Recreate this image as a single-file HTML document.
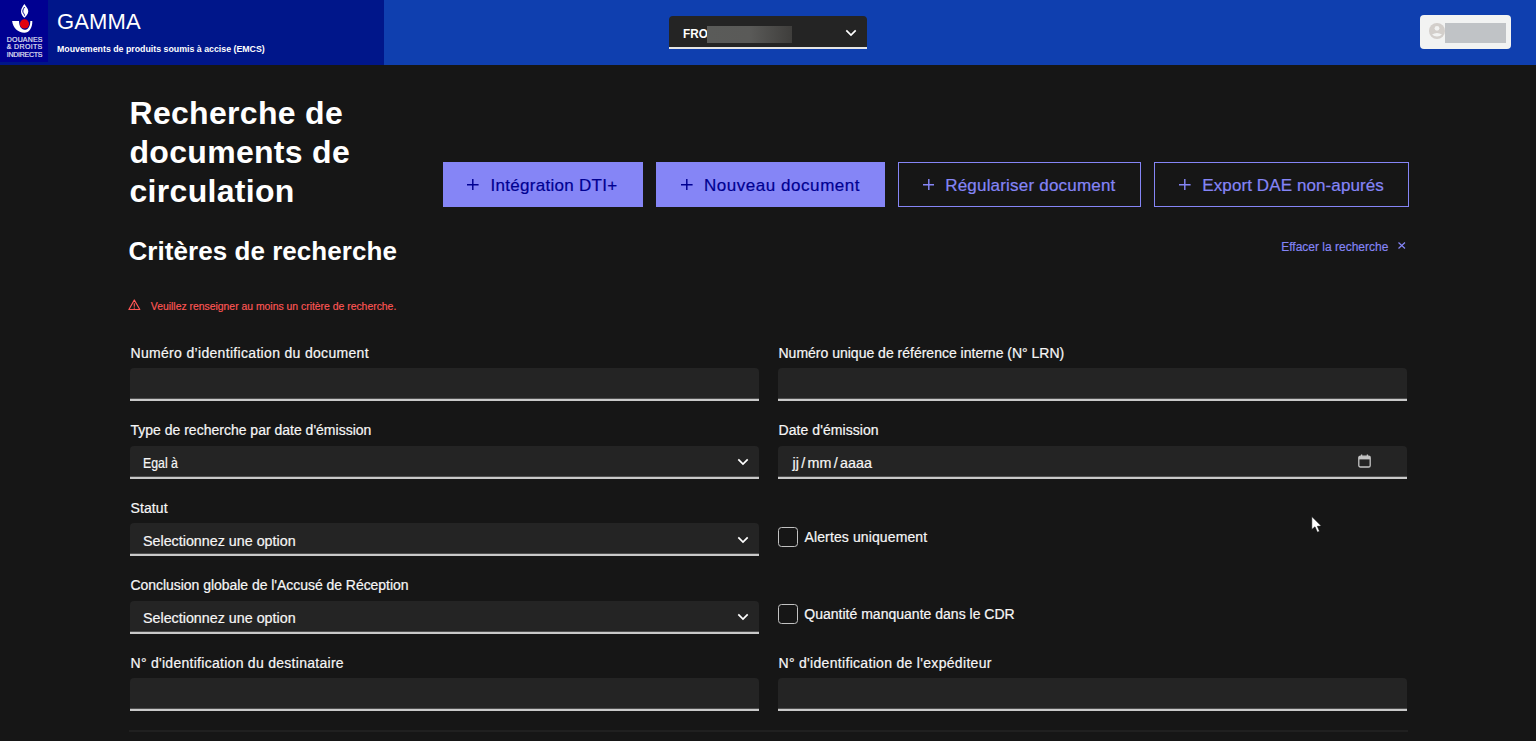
<!DOCTYPE html>
<html lang="fr">
<head>
<meta charset="utf-8">
<title>GAMMA - Recherche de documents de circulation</title>
<style>
*{margin:0;padding:0;box-sizing:border-box}
html,body{width:1536px;height:741px;overflow:hidden;background:#161616;font-family:"Liberation Sans",sans-serif;color:#fff}
.abs{position:absolute}
.t{position:absolute;white-space:nowrap;line-height:1}
#hdr{position:absolute;left:0;top:0;width:1536px;height:64.5px;background:#0f3faf}
#hdr-l{position:absolute;left:0;top:0;width:384px;height:64.5px;background:#00168a}
#logo{position:absolute;left:0;top:0;width:48px;height:62px;background:#000091}
.sel-top{position:absolute;left:669px;top:16px;width:198px;height:32.6px;background:#242424;border-radius:4px 4px 0 0;box-shadow:inset 0 -2px 0 0 #e5e5e5}
.user{position:absolute;left:1420px;top:15px;width:91px;height:34px;background:#f2f3f2;border-radius:4px}
.btn{position:absolute;top:161.5px;height:45.5px}
.btn.pri{background:#8585f6;color:#000091}
.btn.sec{border:1px solid #8585f6;color:#8585f6}
.btn .t{font-size:17px;top:15.4px;-webkit-text-stroke:0.2px currentColor}
.btn.sec .t{top:14.4px}
.plus{position:absolute;top:17px;width:11.6px;height:11.6px}
.btn.sec .plus{top:16px}
.in{position:absolute;width:629px;height:33px;background:#242424;border-radius:4px 4px 0 0;box-shadow:inset 0 -2.2px 0 0 #c9c9c9}
.lbl{position:absolute;white-space:nowrap;line-height:1;font-size:14px;color:#f6f6f6;-webkit-text-stroke:0.2px #f6f6f6;margin-top:-0.5px}
.val{position:absolute;white-space:nowrap;line-height:1;font-size:14.3px;color:#f6f6f6;top:10.6px;-webkit-text-stroke:0.2px #f6f6f6}
.chev{position:absolute;left:607px;top:12.5px}
.cb{position:absolute;left:778px;width:20px;height:20px;border:1.3px solid #c2c2c2;border-radius:3.5px}
</style>
</head>
<body>
<div id="hdr">
  <div id="hdr-l"></div>
  <div id="logo">
    <svg width="48" height="62" viewBox="0 0 48 62" style="position:absolute;left:0;top:0">
      <path d="M24.4 4 C23 6 21 8.5 21 11.5 C21 14.5 23 16.5 24.4 17.8 C26 16.3 28.3 14 28.3 11.3 C28.3 8.5 25.8 6.5 24.4 4 Z" fill="#fff"/>
      <path d="M24.6 7 C23.2 9 22.4 10.8 23 12.3 C23.6 13.6 24.6 14.3 24.5 15.6" stroke="#000091" stroke-width="1" fill="none"/>
      <path d="M12.1 21.1 L19 21.1 C19.3 26.5 21.4 29.8 24.6 29.8 C28.2 29.8 30.4 26 30.3 20.9 L32.3 20.9 C32.6 28 29 32.7 24.4 32.7 C18 32.7 13 28 12.1 21.1 Z" fill="#fff"/>
      <circle cx="24.5" cy="23.9" r="4.6" fill="#e1000f"/>
    </svg>
    <div class="t" style="left:6.8px;top:35.6px;font-size:7px;color:#e8e8f6;line-height:7.6px;font-weight:normal;-webkit-text-stroke:0.15px #e8e8f6"><span style="letter-spacing:0.17px">DOUANES</span><br><span style="letter-spacing:0.34px">&amp; DROITS</span><br><span style="letter-spacing:-0.27px">INDIRECTS</span></div>
  </div>
  <div class="t" style="left:57px;top:10.5px;font-size:22px;color:#fff;letter-spacing:0.15px">GAMMA</div>
  <div class="t" style="left:57px;top:45.3px;font-size:8.8px;font-weight:bold;color:#fff">Mouvements de produits soumis à accise (EMCS)</div>
  <div class="sel-top">
    <div class="t" style="left:14px;top:11.2px;font-size:13.7px;font-weight:bold;color:#fff;transform:scaleX(0.86);transform-origin:0 0">FRO</div>
    <div class="abs" style="left:37.7px;top:9.9px;width:85.5px;height:17.6px;background:linear-gradient(90deg,#5a5b59 0%,#5a5a58 50%,#3f3e3c 100%)"></div>
    <svg class="abs" style="left:176px;top:12.5px" width="12" height="9" viewBox="0 0 12 9"><path d="M1.3 1.4 L6 6.1 L10.7 1.4" stroke="#fff" stroke-width="1.7" fill="none"/></svg>
  </div>
  <div class="user">
    <svg class="abs" style="left:8.6px;top:8.3px" width="16" height="16" viewBox="0 0 16 16">
      <circle cx="8" cy="8" r="8" fill="#d3cfcb"/>
      <circle cx="8" cy="5.3" r="2.4" fill="#f2f3f2"/>
      <path d="M3 11.6 Q8 8.6 13 11.6 Q11 13.6 8 13.6 Q5 13.6 3 11.6 Z" fill="#f2f3f2"/>
    </svg>
    <div class="abs" style="left:25px;top:7.7px;width:61px;height:20.8px;background:#c0c3c6"></div>
  </div>
</div>

<div class="t" style="left:129.5px;top:93.7px;font-size:32px;font-weight:bold;line-height:39px;letter-spacing:0.3px">Recherche de<br>documents de<br>circulation</div>

<div class="btn pri" style="left:442.5px;width:200.5px">
  <svg class="plus" style="left:24.5px" viewBox="0 0 12 12"><path d="M6 0V12M0 6H12" stroke="#000091" stroke-width="1.5"/></svg>
  <div class="t" style="left:48px;letter-spacing:0.29px">Intégration DTI+</div>
</div>
<div class="btn pri" style="left:656.4px;width:228.6px">
  <svg class="plus" style="left:24.6px" viewBox="0 0 12 12"><path d="M6 0V12M0 6H12" stroke="#000091" stroke-width="1.5"/></svg>
  <div class="t" style="left:47.5px;letter-spacing:0.55px">Nouveau document</div>
</div>
<div class="btn sec" style="left:897.6px;width:243.4px">
  <svg class="plus" style="left:24.2px" viewBox="0 0 12 12"><path d="M6 0V12M0 6H12" stroke="#8585f6" stroke-width="1.5"/></svg>
  <div class="t" style="left:46.6px;letter-spacing:0.2px">Régulariser document</div>
</div>
<div class="btn sec" style="left:1154px;width:254.6px">
  <svg class="plus" style="left:24.2px" viewBox="0 0 12 12"><path d="M6 0V12M0 6H12" stroke="#8585f6" stroke-width="1.5"/></svg>
  <div class="t" style="left:47.3px;letter-spacing:0.1px">Export DAE non-apurés</div>
</div>

<div class="t" style="left:128.5px;top:238.1px;font-size:26px;font-weight:bold;letter-spacing:0.05px">Critères de recherche</div>
<div class="t" style="left:1281.2px;top:241.3px;font-size:12px;color:#8585f6;-webkit-text-stroke:0.15px #8585f6">Effacer la recherche</div>
<svg class="abs" style="left:1398.2px;top:242.2px" width="7.5" height="7" viewBox="0 0 7.5 7"><path d="M0.5 0.5L7 6.5M7 0.5L0.5 6.5" stroke="#8585f6" stroke-width="1.2"/></svg>

<svg class="abs" style="left:128.3px;top:299.2px" width="13" height="11.5" viewBox="0 0 13 11.5"><path d="M6.3 1 L11.8 10.5 L0.9 10.5 Z" stroke="#ff5655" stroke-width="1.2" fill="none" stroke-linejoin="round"/><path d="M6.3 4.3V7.7M6.3 8.6V9.7" stroke="#ff5655" stroke-width="1.1"/></svg>
<div class="t" style="left:150.8px;top:301.9px;font-size:10.4px;color:#ff5655;-webkit-text-stroke:0.15px #ff5655">Veuillez renseigner au moins un critère de recherche.</div>

<div class="lbl" style="left:130.5px;top:346.5px;letter-spacing:0.32px">Numéro d’identification du document</div>
<div class="in" style="left:130px;top:368px"></div>
<div class="lbl" style="left:778.5px;top:346.5px">Numéro unique de référence interne (N° LRN)</div>
<div class="in" style="left:778px;top:368px"></div>

<div class="lbl" style="left:130.5px;top:423.8px">Type de recherche par date d'émission</div>
<div class="in" style="left:130px;top:445.6px">
  <div class="val" style="left:13.4px;transform:scaleX(0.86);transform-origin:0 0">Egal à</div>
  <svg class="chev" width="12" height="9" viewBox="0 0 12 9"><path d="M1.3 1.4 L6 6.1 L10.7 1.4" stroke="#fff" stroke-width="1.7" fill="none"/></svg>
</div>
<div class="lbl" style="left:778.5px;top:423.8px;letter-spacing:0.07px">Date d'émission</div>
<div class="in" style="left:778px;top:445.6px">
  <div class="val" style="left:14.5px;word-spacing:-1.6px">jj / mm / aaaa</div>
  <svg class="abs" style="left:580.2px;top:8.8px" width="13" height="14" viewBox="0 0 13 14"><rect x="0.8" y="2.2" width="11.4" height="10.8" rx="1.6" stroke="#c4c4c4" stroke-width="1.3" fill="none"/><rect x="0.8" y="2.2" width="11.4" height="3.2" fill="#c4c4c4"/><path d="M3.6 0.6V3M9.4 0.6V3" stroke="#c4c4c4" stroke-width="1.3"/></svg>
</div>

<div class="lbl" style="left:130.5px;top:501.1px;letter-spacing:0.1px">Statut</div>
<div class="in" style="left:130px;top:523.2px">
  <div class="val" style="left:13px">Selectionnez une option</div>
  <svg class="chev" width="12" height="9" viewBox="0 0 12 9"><path d="M1.3 1.4 L6 6.1 L10.7 1.4" stroke="#fff" stroke-width="1.7" fill="none"/></svg>
</div>
<div class="cb" style="top:526.5px"></div>
<div class="lbl" style="left:804.5px;top:530.2px;letter-spacing:0.12px">Alertes uniquement</div>

<div class="lbl" style="left:130.5px;top:578.7px;letter-spacing:-0.04px">Conclusion globale de l'Accusé de Réception</div>
<div class="in" style="left:130px;top:600.8px">
  <div class="val" style="left:13px">Selectionnez une option</div>
  <svg class="chev" width="12" height="9" viewBox="0 0 12 9"><path d="M1.3 1.4 L6 6.1 L10.7 1.4" stroke="#fff" stroke-width="1.7" fill="none"/></svg>
</div>
<div class="cb" style="top:604.1px"></div>
<div class="lbl" style="left:804.3px;top:607.8px;letter-spacing:0.01px">Quantité manquante dans le CDR</div>

<div class="lbl" style="left:130.5px;top:656.3px;letter-spacing:0.28px">N° d'identification du destinataire</div>
<div class="in" style="left:130px;top:678.4px"></div>
<div class="lbl" style="left:778.5px;top:656.3px;letter-spacing:0.31px">N° d'identification de l'expéditeur</div>
<div class="in" style="left:778px;top:678.4px"></div>

<div class="abs" style="left:129px;top:730.2px;width:1279px;height:1.6px;background:#202020"></div>

<svg class="abs" style="left:1311px;top:516.3px" width="12" height="17" viewBox="0 0 12 17"><path d="M0.8 0.6 L0.8 13.4 L4 10.8 L6.4 16.2 L8.5 15.3 L6.3 10.3 L10.3 10.1 Z" fill="#fff" stroke="#000" stroke-width="0.5"/></svg>
</body>
</html>
